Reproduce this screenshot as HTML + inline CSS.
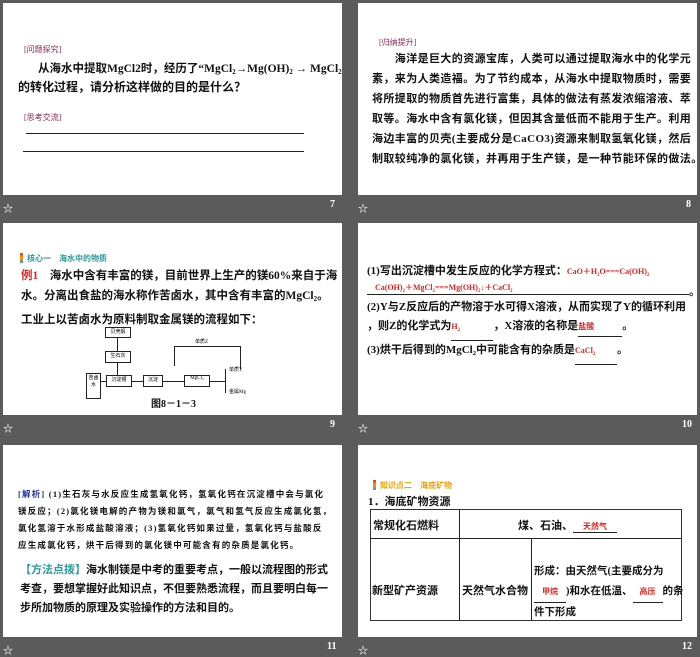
<!DOCTYPE html>
<html><head><meta charset="utf-8"><style>
body{margin:0;width:700px;height:655px;background:#5b5b5b;position:relative;overflow:hidden;font-family:"Liberation Serif","Noto Sans CJK SC",sans-serif;}
.s{position:absolute;background:#fff;width:339px;height:192px;overflow:hidden}
.a{position:absolute;white-space:nowrap}
.b{font-weight:bold;color:#111}
.tag{font-size:8px;color:#8b2252}
.ft{position:absolute;color:#fff;font-size:10px;font-weight:bold}
.red{color:#e02020}
sub{font-size:60%;vertical-align:-2px}
.ln{position:absolute;height:1px;background:#222}
.box{position:absolute;border:1px solid #222;font-size:5px;text-align:center;background:#fff}
</style></head><body>

<!-- slide 7 -->
<div class="s" style="left:3px;top:3px">
<div class="a tag" style="left:21px;top:41px">[问题探究]</div>
<div class="a b" style="left:35px;top:57px;font-size:11.5px">从海水中提取MgCl2时，经历了“MgCl<sub>2</sub>→Mg(OH)<sub>2</sub> → MgCl<sub>2</sub>”</div>
<div class="a b" style="left:15px;top:75px;font-size:12px">的转化过程，请分析这样做的目的是什么？</div>
<div class="a tag" style="left:21px;top:109px">[思考交流]</div>
<div class="ln" style="left:23px;top:130px;width:278px"></div>
<div class="ln" style="left:20px;top:148px;width:281px"></div>
</div>
<div class="ft" style="left:3px;top:200px">☆</div><div class="ft" style="left:330px;top:199px">7</div>

<!-- slide 8 -->
<div class="s" style="left:358px;top:3px">
<div class="a tag" style="left:21px;top:34px">[归纳提升]</div>
<div class="a b" style="left:14px;top:46px;font-size:11px;line-height:20px;letter-spacing:0.4px">　　海洋是巨大的资源宝库，人类可以通过提取海水中的化学元<br>素，来为人类造福。为了节约成本，从海水中提取物质时，需要<br>将所提取的物质首先进行富集，具体的做法有蒸发浓缩溶液、萃<br>取等。海水中含有氯化镁，但因其含量低而不能用于生产。利用<br>海边丰富的贝壳(主要成分是CaCO3)资源来制取氢氧化镁，然后<br>制取较纯净的氯化镁，并再用于生产镁，是一种节能环保的做法。</div>
</div>
<div class="ft" style="left:358px;top:200px">☆</div><div class="ft" style="left:686px;top:199px">8</div>

<!-- slide 9 -->
<div class="s" style="left:3px;top:223px">
<div style="position:absolute;left:17px;top:30px;width:3px;height:10px;background:linear-gradient(#e33,#f90,#39c)"></div>
<div class="a" style="left:24px;top:30px;font-size:8px;color:#2a9a9a;font-weight:bold">核心一　海水中的物质</div>
<div class="a b" style="left:18px;top:43px;font-size:11.5px;line-height:20px"><span class="red">例1</span>　海水中含有丰富的镁，目前世界上生产的镁60%来自于海<br>水。分离出食盐的海水称作苦卤水，其中含有丰富的MgCl<sub>2</sub>。<br>工业上以苦卤水为原料制取金属镁的流程如下：</div>
<div class="box" style="left:102px;top:104px;width:24px;height:9px">贝壳煅</div>
<div class="box" style="left:102px;top:128px;width:24px;height:10px">生石灰</div>
<div class="box" style="left:83px;top:150px;width:13px;height:24px">苦卤水</div>
<div class="box" style="left:103px;top:152px;width:24px;height:10px">沉淀槽</div>
<div class="box" style="left:140px;top:152px;width:18px;height:10px">沉淀</div>
<div class="box" style="left:181px;top:152px;width:24px;height:10px">MgCl₂</div>
<div class="ln" style="left:114px;top:114px;width:1px;height:14px"></div>
<div class="ln" style="left:114px;top:139px;width:1px;height:13px"></div>
<div class="ln" style="left:97px;top:158px;width:6px"></div>
<div class="ln" style="left:128px;top:158px;width:12px"></div>
<div class="ln" style="left:159px;top:158px;width:22px"></div>
<div class="ln" style="left:206px;top:158px;width:16px"></div>
<div class="ln" style="left:222px;top:146px;width:1px;height:24px"></div>
<div class="ln" style="left:171px;top:123px;width:67px"></div>
<div class="ln" style="left:171px;top:123px;width:1px;height:20px"></div>
<div class="ln" style="left:237px;top:123px;width:1px;height:23px"></div>
<div class="a" style="left:226px;top:143px;font-size:5px">单质Y</div>
<div class="a" style="left:226px;top:165px;font-size:5px">金属Mg</div>
<div class="a" style="left:192px;top:115px;font-size:5px">单质Z</div>
<div class="a b" style="left:148px;top:172px;font-size:10px">图8－1－3</div>
</div>
<div class="ft" style="left:3px;top:420px">☆</div><div class="ft" style="left:330px;top:419px">9</div>

<!-- slide 10 -->
<div class="s" style="left:358px;top:223px">
<div class="a b" style="left:9px;top:39px;font-size:11px">(1)写出沉淀槽中发生反应的化学方程式：<span class="red" style="font-size:8px">CaO＋H<sub>2</sub>O===Ca(OH)<sub>2</sub></span></div>
<div class="a red b" style="left:17px;top:59px;font-size:8px">Ca(OH)<sub>2</sub>＋MgCl<sub>2</sub>===Mg(OH)<sub>2</sub>↓＋CaCl<sub>2</sub></div>
<div class="ln" style="left:9px;top:71px;width:322px"></div>
<div class="a b" style="left:331px;top:60px;font-size:11px">。</div>
<div class="a b" style="left:9px;top:75px;font-size:11px;line-height:19px">(2)Y与Z反应后的产物溶于水可得X溶液，从而实现了Y的循环利用<br>，则Z的化学式为<span class="red" style="font-size:8px;display:inline-block;width:42px;border-bottom:1px solid #222">H<sub>2</sub></span>，X溶液的名称是<span class="red" style="font-size:8px;display:inline-block;width:44px;border-bottom:1px solid #222">盐酸</span>。<br>(3)烘干后得到的MgCl<sub>2</sub>中可能含有的杂质是<span class="red" style="font-size:8px;display:inline-block;width:42px;border-bottom:1px solid #222">CaCl<sub>2</sub></span>。</div>
</div>
<div class="ft" style="left:358px;top:420px">☆</div><div class="ft" style="left:682px;top:419px">10</div>

<!-- slide 11 -->
<div class="s" style="left:3px;top:445px">
<div class="a b" style="left:15px;top:41px;font-size:8.5px;line-height:17px;letter-spacing:1.2px"><span style="color:#2233aa">[解析]</span> (1)生石灰与水反应生成氢氧化钙，氢氧化钙在沉淀槽中会与氯化<br>镁反应；(2)氯化镁电解的产物为镁和氯气，氯气和氢气反应生成氯化氢，<br>氯化氢溶于水形成盐酸溶液；(3)氢氧化钙如果过量，氢氧化钙与盐酸反<br>应生成氯化钙，烘干后得到的氯化镁中可能含有的杂质是氯化钙。</div>
<div class="a b" style="left:17px;top:116px;font-size:11px;line-height:19px"><span style="color:#2a9a9a">【方法点拨】</span>海水制镁是中考的重要考点，一般以流程图的形式<br>考查，要想掌握好此知识点，不但要熟悉流程，而且要明白每一<br>步所加物质的原理及实验操作的方法和目的。</div>
</div>
<div class="ft" style="left:3px;top:642px">☆</div><div class="ft" style="left:327px;top:641px">11</div>

<!-- slide 12 -->
<div class="s" style="left:358px;top:445px">
<div style="position:absolute;left:15px;top:35px;width:3px;height:10px;background:linear-gradient(#e33,#f90,#39c)"></div>
<div class="a" style="left:22px;top:35px;font-size:8px;color:#f0a000;font-weight:bold">知识点二　海底矿物</div>
<div class="a b" style="left:10px;top:48px;font-size:11px">1．海底矿物资源</div>
<div style="position:absolute;left:12px;top:64px;width:310px;height:110px;border:1px solid #333"></div>
<div class="ln" style="left:12px;top:93px;width:311px"></div>
<div class="ln" style="left:101px;top:64px;width:1px;height:111px"></div>
<div class="ln" style="left:173px;top:93px;width:1px;height:82px"></div>
<div class="a b" style="left:15px;top:72px;font-size:11px">常规化石燃料</div>
<div class="a b" style="left:160px;top:72px;font-size:11px">煤、石油、<span class="red" style="font-size:8px;display:inline-block;width:44px;border-bottom:1px solid #222;text-align:center">天然气</span></div>
<div class="a b" style="left:14px;top:137px;font-size:11px">新型矿产资源</div>
<div class="a b" style="left:104px;top:137px;font-size:11px">天然气水合物</div>
<div class="a b" style="left:176px;top:117px;font-size:10.5px;line-height:20px">形成：由天然气(主要成分为<br><span class="red" style="font-size:8px;display:inline-block;width:32px;border-bottom:1px solid #222;text-align:center">甲烷</span>)和水在低温、<span class="red" style="font-size:8px;display:inline-block;width:30px;border-bottom:1px solid #222;text-align:center">高压</span>的条<br>件下形成</div>
</div>
<div class="ft" style="left:358px;top:642px">☆</div><div class="ft" style="left:682px;top:641px">12</div>

</body></html>
